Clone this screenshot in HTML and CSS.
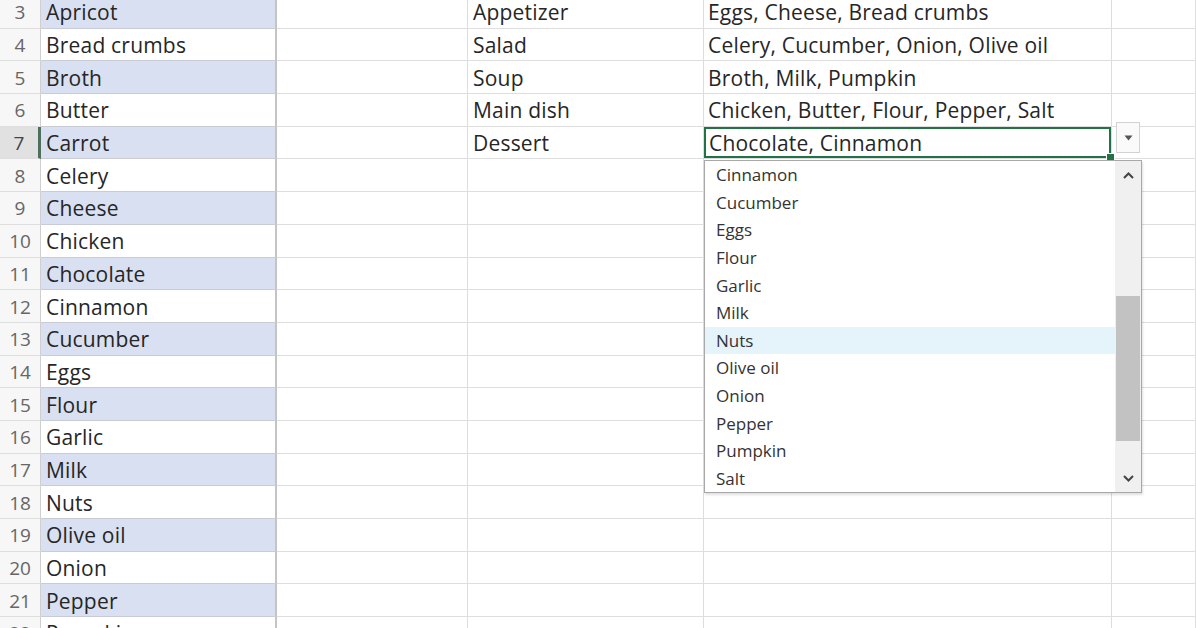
FILE: index.html
```html
<!DOCTYPE html>
<html lang="en">
  <head>
    <title>Menu ingredients</title>
    <meta name="viewport" content="width=device-width, initial-scale=1">
    <link rel="stylesheet" href="styles.css">
  </head>
  <body>
    <div class="sheet">
      <div class="row band"><div class="hdr">3</div><div class="ca">Apricot</div><div class="cb"></div><div class="cc">Appetizer</div><div class="cd">Eggs, Cheese, Bread crumbs</div><div class="ce"></div></div>
      <div class="row"><div class="hdr">4</div><div class="ca">Bread crumbs</div><div class="cb"></div><div class="cc">Salad</div><div class="cd">Celery, Cucumber, Onion, Olive oil</div><div class="ce"></div></div>
      <div class="row band"><div class="hdr">5</div><div class="ca">Broth</div><div class="cb"></div><div class="cc">Soup</div><div class="cd">Broth, Milk, Pumpkin</div><div class="ce"></div></div>
      <div class="row"><div class="hdr">6</div><div class="ca">Butter</div><div class="cb"></div><div class="cc">Main dish</div><div class="cd">Chicken, Butter, Flour, Pepper, Salt</div><div class="ce"></div></div>
      <div class="row band current"><div class="hdr">7</div><div class="ca">Carrot</div><div class="cb"></div><div class="cc">Dessert</div><div class="cd active">Chocolate, Cinnamon<span class="handle"></span></div><div class="ce"></div></div>
      <div class="row"><div class="hdr">8</div><div class="ca">Celery</div><div class="cb"></div><div class="cc"></div><div class="cd"></div><div class="ce"></div></div>
      <div class="row band"><div class="hdr">9</div><div class="ca">Cheese</div><div class="cb"></div><div class="cc"></div><div class="cd"></div><div class="ce"></div></div>
      <div class="row"><div class="hdr">10</div><div class="ca">Chicken</div><div class="cb"></div><div class="cc"></div><div class="cd"></div><div class="ce"></div></div>
      <div class="row band"><div class="hdr">11</div><div class="ca">Chocolate</div><div class="cb"></div><div class="cc"></div><div class="cd"></div><div class="ce"></div></div>
      <div class="row"><div class="hdr">12</div><div class="ca">Cinnamon</div><div class="cb"></div><div class="cc"></div><div class="cd"></div><div class="ce"></div></div>
      <div class="row band"><div class="hdr">13</div><div class="ca">Cucumber</div><div class="cb"></div><div class="cc"></div><div class="cd"></div><div class="ce"></div></div>
      <div class="row"><div class="hdr">14</div><div class="ca">Eggs</div><div class="cb"></div><div class="cc"></div><div class="cd"></div><div class="ce"></div></div>
      <div class="row band"><div class="hdr">15</div><div class="ca">Flour</div><div class="cb"></div><div class="cc"></div><div class="cd"></div><div class="ce"></div></div>
      <div class="row"><div class="hdr">16</div><div class="ca">Garlic</div><div class="cb"></div><div class="cc"></div><div class="cd"></div><div class="ce"></div></div>
      <div class="row band"><div class="hdr">17</div><div class="ca">Milk</div><div class="cb"></div><div class="cc"></div><div class="cd"></div><div class="ce"></div></div>
      <div class="row"><div class="hdr">18</div><div class="ca">Nuts</div><div class="cb"></div><div class="cc"></div><div class="cd"></div><div class="ce"></div></div>
      <div class="row band"><div class="hdr">19</div><div class="ca">Olive oil</div><div class="cb"></div><div class="cc"></div><div class="cd"></div><div class="ce"></div></div>
      <div class="row"><div class="hdr">20</div><div class="ca">Onion</div><div class="cb"></div><div class="cc"></div><div class="cd"></div><div class="ce"></div></div>
      <div class="row band"><div class="hdr">21</div><div class="ca">Pepper</div><div class="cb"></div><div class="cc"></div><div class="cd"></div><div class="ce"></div></div>
      <div class="row"><div class="hdr">22</div><div class="ca">Pumpkin</div><div class="cb"></div><div class="cc"></div><div class="cd"></div><div class="ce"></div></div>

      <!-- data validation arrow + open list -->
      <div class="dd-button"><svg width="9" height="6" viewBox="0 0 9 6"><path d="M0.5 0.5 H8.5 L4.5 5.5 Z" fill="#555"/></svg></div>
      <div class="dd-list">
        <ul class="dd-items">
          <li>Cinnamon</li>
          <li>Cucumber</li>
          <li>Eggs</li>
          <li>Flour</li>
          <li>Garlic</li>
          <li>Milk</li>
          <li class="hover">Nuts</li>
          <li>Olive oil</li>
          <li>Onion</li>
          <li>Pepper</li>
          <li>Pumpkin</li>
          <li>Salt</li>
        </ul>
        <div class="dd-scroll">
          <div class="arrow"><svg width="11" height="7" viewBox="0 0 11 7"><path d="M1 6 L5.5 1.5 L10 6" fill="none" stroke="#444" stroke-width="2"/></svg></div>
          <div class="track"><div class="thumb"></div></div>
          <div class="arrow"><svg width="11" height="7" viewBox="0 0 11 7"><path d="M1 1 L5.5 5.5 L10 1" fill="none" stroke="#444" stroke-width="2"/></svg></div>
        </div>
      </div>
    </div>
  </body>
</html>
```

FILE: styles.css
```css
body {
  margin: 0;
  background: #fff;
  overflow: hidden;
  font-family: "Open Sans", "Noto Sans", sans-serif;
  color: #262626;
}
.sheet {
  position: relative;
  margin-top: -4px;
}
.row {
  display: grid;
  grid-template-columns: 41px 236px 191px 236px 408px 1fr;
  height: 32.7px;
}
.row > div {
  box-sizing: border-box;
  border-right: 1px solid #dedede;
  border-bottom: 1px solid #dedede;
  display: flex;
  align-items: center;
  font-size: 21px;
  letter-spacing: 0.2px;
  white-space: nowrap;
  padding-top: 1px;
}
.hdr {
  background: #f7f7f7;
  color: #666;
  justify-content: center;
  font-size: 19px !important;
  letter-spacing: 0 !important;
  border-right: 1px solid #cfcfcf !important;
}
.current .hdr {
  background: #e1e1e1;
  color: #444;
  border-right: 3px solid #4d6f5c !important;
}
.ca {
  padding-left: 5px;
  border-bottom: 1px solid #c9ccd4 !important;
  border-right: 2px solid #c4c4c4 !important;
}
.band .ca {
  background: #d9e0f1;
}
.cc {
  padding-left: 5px;
  border-right-color: #d6e2d6 !important;
}
.cd {
  padding-left: 4px;
  border-right-color: #d6e2d6 !important;
}
.cd.active {
  position: relative;
  box-shadow: inset 0 0 0 2px #217346;
  padding-left: 5px;
}
.handle {
  position: absolute;
  right: -4px;
  bottom: -3px;
  width: 7px;
  height: 6px;
  background: #217346;
  border: 1px solid #fff;
}
.dd-button {
  position: absolute;
  left: 1116px;
  top: 126px;
  width: 24px;
  height: 31px;
  box-sizing: border-box;
  border: 1px solid #d2d2d2;
  background: #fafafa;
  display: flex;
  align-items: center;
  justify-content: center;
}
.dd-list {
  position: absolute;
  left: 704px;
  top: 164px;
  width: 438px;
  height: 333px;
  box-sizing: border-box;
  border: 1px solid #a8a8a8;
  background: #fff;
  box-shadow: 1px 2px 2px rgba(0, 0, 0, 0.12);
  display: flex;
}
.dd-items {
  list-style: none;
  margin: 0;
  padding: 0;
  flex: 1;
}
.dd-items li {
  height: 27.6px;
  display: flex;
  align-items: center;
  padding-left: 11px;
  font-size: 17px;
  color: #333;
}
.dd-items li.hover {
  background: #e5f3fb;
}
.dd-scroll {
  width: 26px;
  background: #f0f0f0;
  display: flex;
  flex-direction: column;
}
.arrow {
  height: 28px;
  display: flex;
  align-items: center;
  justify-content: center;
}
.track {
  flex: 1;
  padding: 107px 1px 0 1px;
}
.thumb {
  height: 145px;
  background: #c2c2c2;
}
```
